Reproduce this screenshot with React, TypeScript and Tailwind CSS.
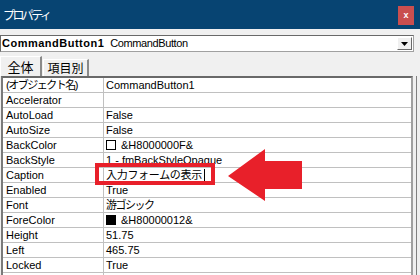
import React from "react";

interface PropRow {
  name: string;
  value: string;
  swatch?: "white" | "black";
  nameTrack?: string;
  valueTrack?: string;
}

const rows: PropRow[] = [
  { name: "(オブジェクト名)", value: "CommandButton1", nameTrack: "tracking-[-1.5px]" },
  { name: "Accelerator", value: "" },
  { name: "AutoLoad", value: "False" },
  { name: "AutoSize", value: "False" },
  { name: "BackColor", value: "&H8000000F&", swatch: "white" },
  { name: "BackStyle", value: "1 - fmBackStyleOpaque" },
  { name: "Caption", value: "入力フォームの表示", valueTrack: "tracking-[-0.3px]" },
  { name: "Enabled", value: "True" },
  { name: "Font", value: "游ゴシック", valueTrack: "tracking-[-1.5px]" },
  { name: "ForeColor", value: "&H80000012&", swatch: "black" },
  { name: "Height", value: "51.75" },
  { name: "Left", value: "465.75" },
  { name: "Locked", value: "True" },
  { name: "", value: "" },
];

const font = "font-['Liberation_Sans','Noto_Sans_CJK_JP',sans-serif]";

function PropertyRow({ row, caption }: { row: PropRow; caption: boolean }) {
  return (
    <div className="flex h-[15px] border-b border-[#c0c0c0] text-[11px] leading-[14px] text-black">
      <div className={`w-[101px] shrink-0 border-r border-[#c0c0c0] pl-[3px] whitespace-nowrap ${row.nameTrack ?? ""}`}>
        {row.name}
      </div>
      <div className={`flex flex-1 items-center pl-[2px] whitespace-nowrap ${row.valueTrack ?? ""}`}>
        {row.swatch && (
          <span
            className={`mr-[5px] inline-block h-[10px] w-[10px] border border-black ${
              row.swatch === "black" ? "bg-black" : "bg-white"
            }`}
          />
        )}
        <span>{row.value}</span>
        {caption && <span className="ml-[2px] inline-block h-[12px] w-px bg-black" />}
      </div>
    </div>
  );
}

export default function App() {
  return (
    <div className={`relative h-[275px] w-[420px] overflow-hidden bg-[#f0f0f0] ${font}`}>
      {/* Title bar */}
      <div className="flex h-[29px] items-center justify-between bg-[#074472] pl-[3px] pr-[6px]">
        <span className="font-['Noto_Sans_CJK_JP',sans-serif] text-[12px] tracking-[-2.6px] text-white">
          プロパティ
        </span>
        <div className="mt-[2px] flex h-[19px] w-[16px] items-center justify-center bg-[#c94f4f] text-[9px] font-bold leading-none text-white">
          x
        </div>
      </div>

      {/* Object combo */}
      <div className="mt-[6px] mr-[6px] flex h-[17px] items-center border border-[#a0a0a0] border-t-[#696969] border-l-[#696969] bg-white pl-[1px] text-[11px] text-black">
        <span className="font-bold tracking-[0.5px]">CommandButton1</span>
        <span className="ml-[6px] tracking-[-0.4px]">CommandButton</span>
        <div className="ml-auto mr-[1px] flex h-[13px] w-[15px] items-center justify-center border border-white border-r-[#696969] border-b-[#696969] bg-[#f0f0f0]">
          <svg width="7" height="4" viewBox="0 0 7 4">
            <path d="M0 0H7L3.5 4Z" fill="#000" />
          </svg>
        </div>
      </div>

      {/* Tabs */}
      <div className="mt-[4px] flex h-[20px] items-end">
        <div className="flex h-[20px] w-[42px] items-center justify-center border-l border-t border-white border-r-2 border-r-[#8a8a8a] bg-[#f0f0f0] font-['Noto_Sans_CJK_JP',sans-serif] text-[13px] leading-none">
          全体
        </div>
        <div className="ml-[1px] flex h-[17px] w-[46px] items-center justify-center border-l border-t border-white border-r-2 border-r-[#8a8a8a] font-['Noto_Sans_CJK_JP',sans-serif] text-[12px] leading-none">
          項目別
        </div>
      </div>

      {/* Property grid */}
      <div className="flex">
        <div className="ml-[1px] h-[210px] w-[412px] border-2 border-[#696969] border-l-[#7a7a7a] border-r-[#a0a0a0] bg-white">
          {rows.map((row, i) => (
            <PropertyRow key={i} row={row} caption={row.name === "Caption"} />
          ))}
        </div>
        <div className="ml-[3px] w-px bg-[#808080]" />
      </div>

      {/* Red highlight annotation */}
      <div className="absolute left-[95px] top-[163px] h-[22px] w-[120px] border-4 border-[#e8202a]" />
      <svg className="absolute left-[226px] top-[147px]" width="80" height="56" viewBox="0 0 80 56">
        <path d="M2 29L39 2V14H76V42H39V54Z" fill="#e8202a" />
      </svg>
    </div>
  );
}
